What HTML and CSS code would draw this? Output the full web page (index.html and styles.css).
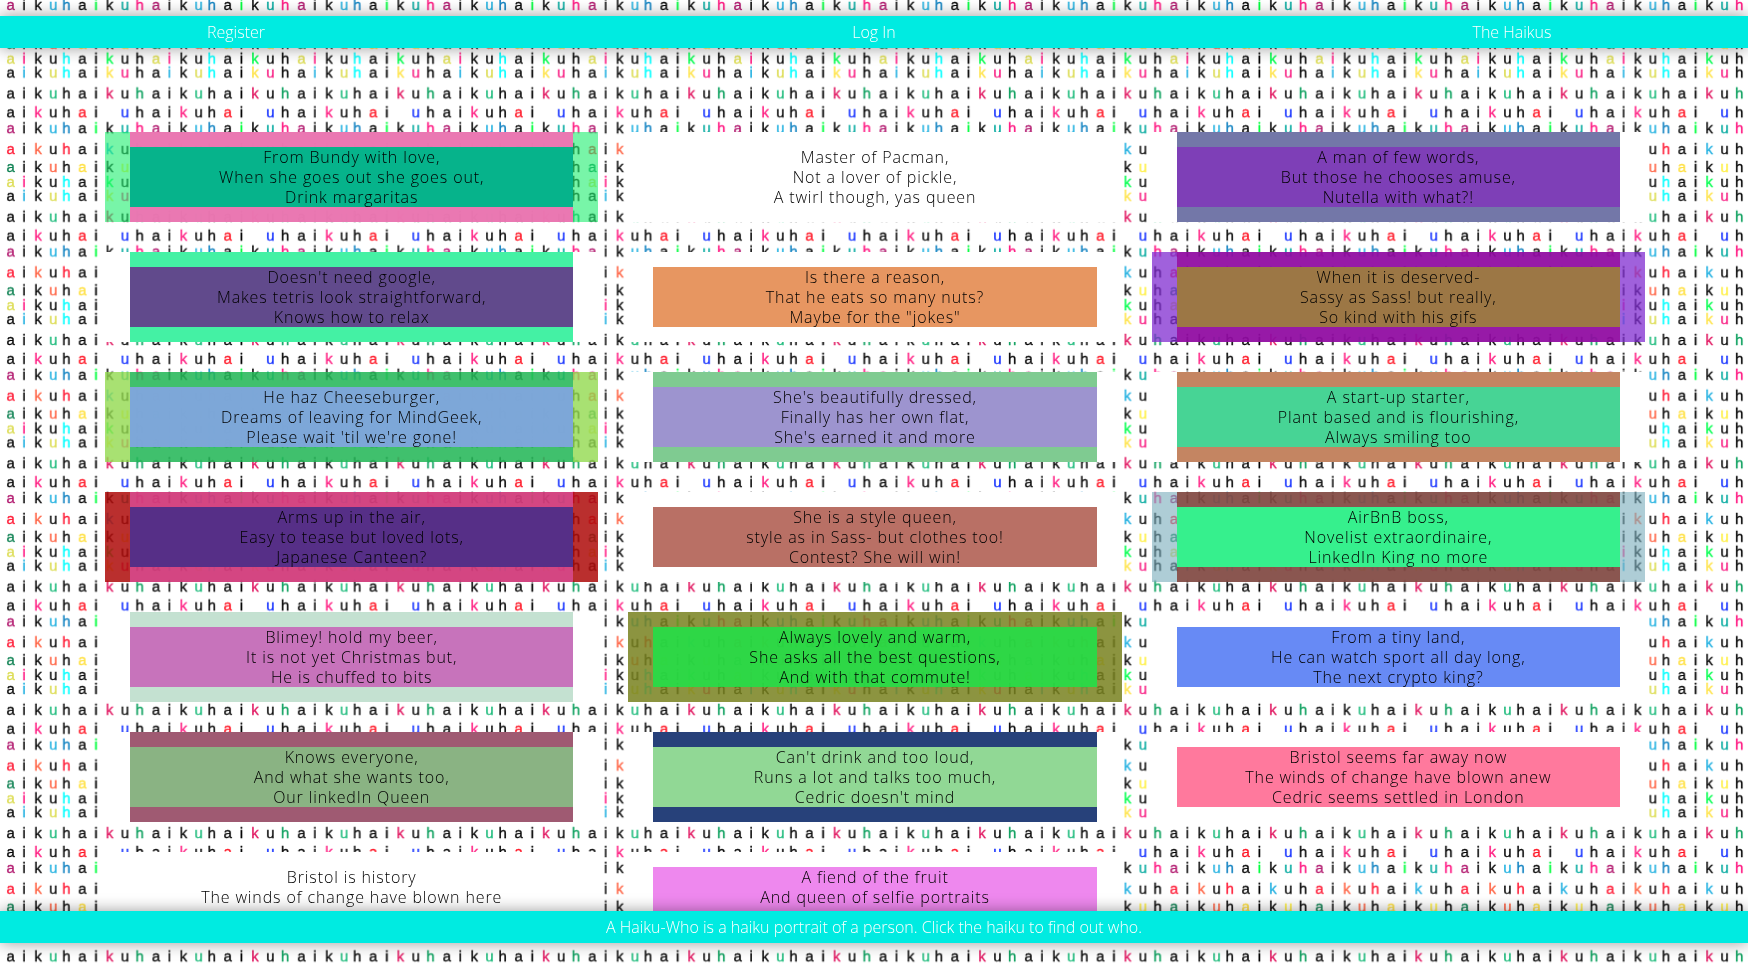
FILE: index.html
```html
<!DOCTYPE html>
<html lang="en">
<head>
<meta charset="utf-8">
<meta name="viewport" content="width=device-width, initial-scale=1">
<title>Haiku-Who</title>
<link rel="stylesheet" href="styles.css">
</head>
<body>
<svg class="backdrop" aria-hidden="true">
  <defs>
    <pattern id="letters" x="0" y="-3" width="145.42" height="123.28" patternUnits="userSpaceOnUse">
      <g class="letters" transform="translate(0 4)"></g>
    </pattern>
  </defs>
  <rect width="100%" height="100%" fill="url(#letters)"/>
</svg>

<header class="bar bar-top">
  <nav class="menu">
    <a href="#register">Register</a>
    <a href="#login">Log In</a>
    <a href="#haikus">The Haikus</a>
  </nav>
</header>

<main class="haikus" id="haikus">
  <article class="card card-bundy"><a href="#">From Bundy with love,<br>When she goes out she goes out,<br>Drink margaritas</a></article>
  <article class="card"><a href="#">Master of Pacman,<br>Not a lover of pickle,<br>A twirl though, yas queen</a></article>
  <article class="card card-words"><a href="#">A man of few words,<br>But those he chooses amuse,<br>Nutella with what?!</a></article>

  <article class="card card-tetris"><a href="#">Doesn't need google,<br>Makes tetris look straightforward,<br>Knows how to relax</a></article>
  <article class="card card-nuts"><a href="#">Is there a reason,<br>That he eats so many nuts?<br>Maybe for the "jokes"</a></article>
  <article class="card card-gifs"><a href="#">When it is deserved-<br>Sassy as Sass! but really,<br>So kind with his gifs</a></article>

  <article class="card card-burger"><a href="#">He haz Cheeseburger,<br>Dreams of leaving for MindGeek,<br>Please wait 'til we're gone!</a></article>
  <article class="card card-flat"><a href="#">She's beautifully dressed,<br>Finally has her own flat,<br>She's earned it and more</a></article>
  <article class="card card-plant"><a href="#">A start-up starter,<br>Plant based and is flourishing,<br>Always smiling too</a></article>

  <article class="card card-canteen"><a href="#">Arms up in the air,<br>Easy to tease but loved lots,<br>Japanese Canteen?</a></article>
  <article class="card card-style"><a href="#">She is a style queen,<br>style as in Sass- but clothes too!<br>Contest? She will win!</a></article>
  <article class="card card-boss"><a href="#">AirBnB boss,<br>Novelist extraordinaire,<br>LinkedIn King no more</a></article>

  <article class="card card-beer"><a href="#">Blimey! hold my beer,<br>It is not yet Christmas but,<br>He is chuffed to bits</a></article>
  <article class="card card-commute"><a href="#">Always lovely and warm,<br>She asks all the best questions,<br>And with that commute!</a></article>
  <article class="card card-crypto"><a href="#">From a tiny land,<br>He can watch sport all day long,<br>The next crypto king?</a></article>

  <article class="card card-queen"><a href="#">Knows everyone,<br>And what she wants too,<br>Our linkedIn Queen</a></article>
  <article class="card card-runner"><a href="#">Can't drink and too loud,<br>Runs a lot and talks too much,<br>Cedric doesn't mind</a></article>
  <article class="card card-london"><a href="#">Bristol seems far away now<br>The winds of change have blown anew<br>Cedric seems settled in London</a></article>

  <article class="card"><a href="#">Bristol is history<br>The winds of change have blown here<br>Cedric is now settled</a></article>
  <article class="card card-fruit"><a href="#">A fiend of the fruit<br>And queen of selfie portraits<br>Always on the run</a></article>
</main>

<footer class="bar bar-bottom">A Haiku-Who is a haiku portrait of a person. Click the haiku to find out who.</footer>
<script src="backdrop.js"></script>
</body>
</html>
```
FILE: styles.css
```css
* {
  box-sizing: border-box;
}

body {
  margin: 0;
  background: #fff;
  color: #000;
  font-family: "Open Sans", "Noto Sans", sans-serif;
  font-size: 16px;
  font-weight: 300;
  line-height: 20px;
}

a {
  color: inherit;
  text-decoration: none;
}

/* Repeating coloured letters behind the page */
.backdrop {
  position: fixed;
  inset: 0;
  z-index: -1;
  width: 100%;
  height: 100%;
}

.letters {
  font-family: "Liberation Sans", Arial, sans-serif;
  font-size: 15px;
  font-weight: 400;
  text-anchor: middle;
  stroke-width: 0.3;
}

/* Fixed bars */
.bar {
  position: fixed;
  left: 0;
  right: 0;
  z-index: 1;
  padding: 6px 0;
  background: #00ebe1;
  box-shadow: 0 0 16px rgba(0, 0, 0, 0.4);
  color: #fff;
  text-align: center;
}

.bar-top {
  top: 16px;
}

.bar-bottom {
  bottom: 21px;
}

.menu {
  display: grid;
  grid-template-columns: repeat(3, 27%);
  justify-content: space-between;
}

/* Haiku cards */
.haikus {
  display: grid;
  grid-template-columns: repeat(3, 1fr);
  gap: 30px;
  padding: 132px 103px 0 105px;
}

.card {
  --side: #fff;
  --band: #fff;
  --fill: transparent;
  padding: 15px 0;
  border: solid var(--side);
  border-width: 0 25px;
  background: var(--band);
  background-clip: padding-box;
  letter-spacing: 0.055em;
  text-align: center;
}

.card a {
  display: block;
  background: var(--fill);
}

.card-bundy { --side: rgba(30, 238, 110, 0.6); --band: rgba(234, 118, 177, 0.99); --fill: #06b38b; }
.card-words { --band: #7377a8; --fill: #7e3fb7; }
.card-tetris { --band: #44f1a4; --fill: #614a8c; }
.card-nuts { --fill: #e79661; }
.card-gifs { --side: rgba(128, 44, 208, 0.75); --band: rgba(145, 12, 162, 0.94); --fill: #9c7745; }
.card-burger { --side: rgba(146, 218, 79, 0.8); --band: rgba(36, 183, 87, 0.87); --fill: rgba(130, 167, 222, 0.95); }
.card-flat { --band: #7fcb91; --fill: #9d94cf; }
.card-plant { --band: #c48562; --fill: #47d495; }
.card-canteen { --side: rgba(174, 10, 9, 0.85); --band: rgba(210, 60, 123, 0.95); --fill: rgba(83, 46, 135, 0.97); }
.card-style { --fill: #b97065; }
.card-boss { --side: rgba(120, 172, 187, 0.6); --band: rgba(129, 73, 67, 0.93); --fill: #36f08d; }
.card-beer { --band: #c4e1d1; --fill: #c773bb; }
.card-commute { --side: rgba(120, 129, 31, 0.85); --band: rgba(120, 129, 31, 0.85); --fill: rgba(30, 228, 73, 0.85); }
.card-crypto { --fill: #678af5; }
.card-queen { --band: #9f5a72; --fill: #8ab383; }
.card-runner { --band: #27417a; --fill: #91d895; }
.card-london { --fill: #ff799d; }
.card-fruit { --fill: #ee88ee; }
```
FILE: backdrop.js
```js
// Fills the repeating tile with rows of letters, each with its own colours.
const centres = [10.7, 24, 38.2, 53.2, 66.5, 82.4, 96, 109.7, 125, 139.7];
const K = '#000';
const rows = [
  { y: 8.5, colours: ['#b0136b', K, K, '#1fb0e0', '#0b7fc0', K, '#00ff3c', K, '#00a89d', '#ff1480'] },
  { y: 29.7, colours: ['#ff1430', K, '#ff6040', K, '#ff1430', K, K, '#1caee0', K, K] },
  { y: 48, colours: ['#0a7f4f', K, K, '#ff6040', K, '#ffe040', K, K, '#fff044', K] },
  { y: 63, colours: ['#dcdc50', '#ff1480', K, K, '#00ffff', K, K, '#00ff4c', K, K] },
  { y: 76.5, colours: [K, '#1caee0', K, '#dcdc50', '#00ffff', K, K, '#ffe44c', '#f81880', K] },
  { y: 97.5, colours: [K, K, K, '#17b978', K, K, K, '#e0105c', K, '#0a9f5c'] },
  { y: 116, colours: [K, K, '#ff1a80', K, K, '#ff1020', K, null, '#0a28ff', K] },
];
const tile = document.querySelector('.letters');
rows.forEach(({ y, colours }) => {
  colours.forEach((colour, i) => {
    if (!colour) return;
    const letter = document.createElementNS('http://www.w3.org/2000/svg', 'text');
    letter.textContent = 'aikuhaikuh'[i];
    letter.setAttribute('x', centres[i]);
    letter.setAttribute('y', y);
    letter.setAttribute('fill', colour);
    letter.setAttribute('stroke', colour);
    tile.appendChild(letter);
  });
});
```
